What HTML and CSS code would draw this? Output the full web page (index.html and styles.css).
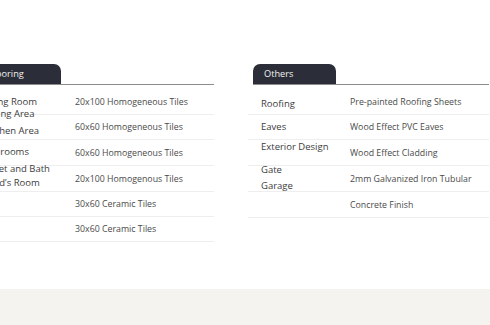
FILE: index.html
```html
<!DOCTYPE html>
<html>
<head>
<meta charset="utf-8">
<link rel="stylesheet" href="styles.css">
</head>
<body>
<main class="specs">
  <section class="spec spec--flooring">
    <div class="spec-head"><div class="tab">Flooring</div></div>
    <div class="row h29">
      <div class="label shift-living">Living Room<br>Dining Area</div>
      <div class="value shift-first">20x100 Homogeneous Tiles</div>
    </div>
    <div class="row h25">
      <div class="label shift-kitchen">Kitchen Area</div>
      <div class="value">60x60 Homogeneous Tiles</div>
    </div>
    <div class="row h26">
      <div class="label">Bedrooms</div>
      <div class="value">60x60 Homogeneous Tiles</div>
    </div>
    <div class="row h26">
      <div class="label shift-toilet">Toilet and Bath<br>Maid’s Room</div>
      <div class="value">20x100 Homogenous Tiles</div>
    </div>
    <div class="row h25">
      <div class="label"></div>
      <div class="value">30x60 Ceramic Tiles</div>
    </div>
    <div class="row h25">
      <div class="label"></div>
      <div class="value">30x60 Ceramic Tiles</div>
    </div>
  </section>
  <section class="spec">
    <div class="spec-head"><div class="tab">Others</div></div>
    <div class="row h29">
      <div class="label shift-roofing">Roofing</div>
      <div class="value shift-first">Pre-painted Roofing Sheets</div>
    </div>
    <div class="row h25">
      <div class="label">Eaves</div>
      <div class="value">Wood Effect PVC Eaves</div>
    </div>
    <div class="row h26">
      <div class="label shift-exterior">Exterior Design</div>
      <div class="value">Wood Effect Cladding</div>
    </div>
    <div class="row h26">
      <div class="label pair"><span>Gate</span><span>Garage</span></div>
      <div class="value">2mm Galvanized Iron Tubular</div>
    </div>
    <div class="row h26">
      <div class="label"></div>
      <div class="value">Concrete Finish</div>
    </div>
  </section>
</main>
<footer class="footer"></footer>
</body>
</html>
```
FILE: styles.css
```css
html, body {
  margin: 0;
  padding: 0;
  background: #ffffff;
  overflow: hidden;
}
body {
  width: 490px;
  height: 325px;
  display: flex;
  flex-direction: column;
  font-family: "Open Sans", "Liberation Sans", sans-serif;
  color: #3a3a3a;
}
.specs {
  display: grid;
  grid-template-columns: 241px 241px;
  column-gap: 34px;
  margin-left: -27px;
  padding-top: 64px;
  height: 225px;
}
.spec-head {
  margin-left: 5px;
  border-bottom: 1px solid #8c8c8c;
  height: 20px;
  margin-bottom: 1px;
}
.tab {
  width: 83px;
  height: 20px;
  box-sizing: border-box;
  background: #2b2e38;
  color: #f2f2f2;
  border-radius: 7px 7px 0 0;
  padding-left: 11px;
  font-size: 9.2px;
  line-height: 20px;
}
.row {
  display: grid;
  grid-template-columns: 102px 1fr;
  align-items: center;
  border-bottom: 1px solid #eeeeee;
  box-sizing: border-box;
}
.h25 { height: 25px; }
.h26 { height: 26px; }
.h29 { height: 29px; }
.label {
  padding-left: 13px;
  font-size: 9.5px;
  line-height: 12.5px;
  color: #3c3c3c;
  white-space: nowrap;
}
.spec--flooring .label {
  padding-left: 10px;
}
.value {
  font-size: 8.8px;
  line-height: 12px;
  color: #4a4a4a;
  white-space: nowrap;
}
.shift-first { margin-bottom: -3px; }
.shift-living { margin-bottom: -15px; line-height: 12px; }
.shift-kitchen { margin-bottom: -8px; }
.shift-toilet { margin-top: -6px; line-height: 14px; }
.shift-roofing { margin-bottom: -9px; }
.shift-exterior { margin-top: -10px; }
.pair {
  display: flex;
  flex-direction: column;
  gap: 3.5px;
  margin-top: -2px;
}
.footer {
  margin-top: auto;
  height: 36px;
  background: #f4f3ef;
}
```
